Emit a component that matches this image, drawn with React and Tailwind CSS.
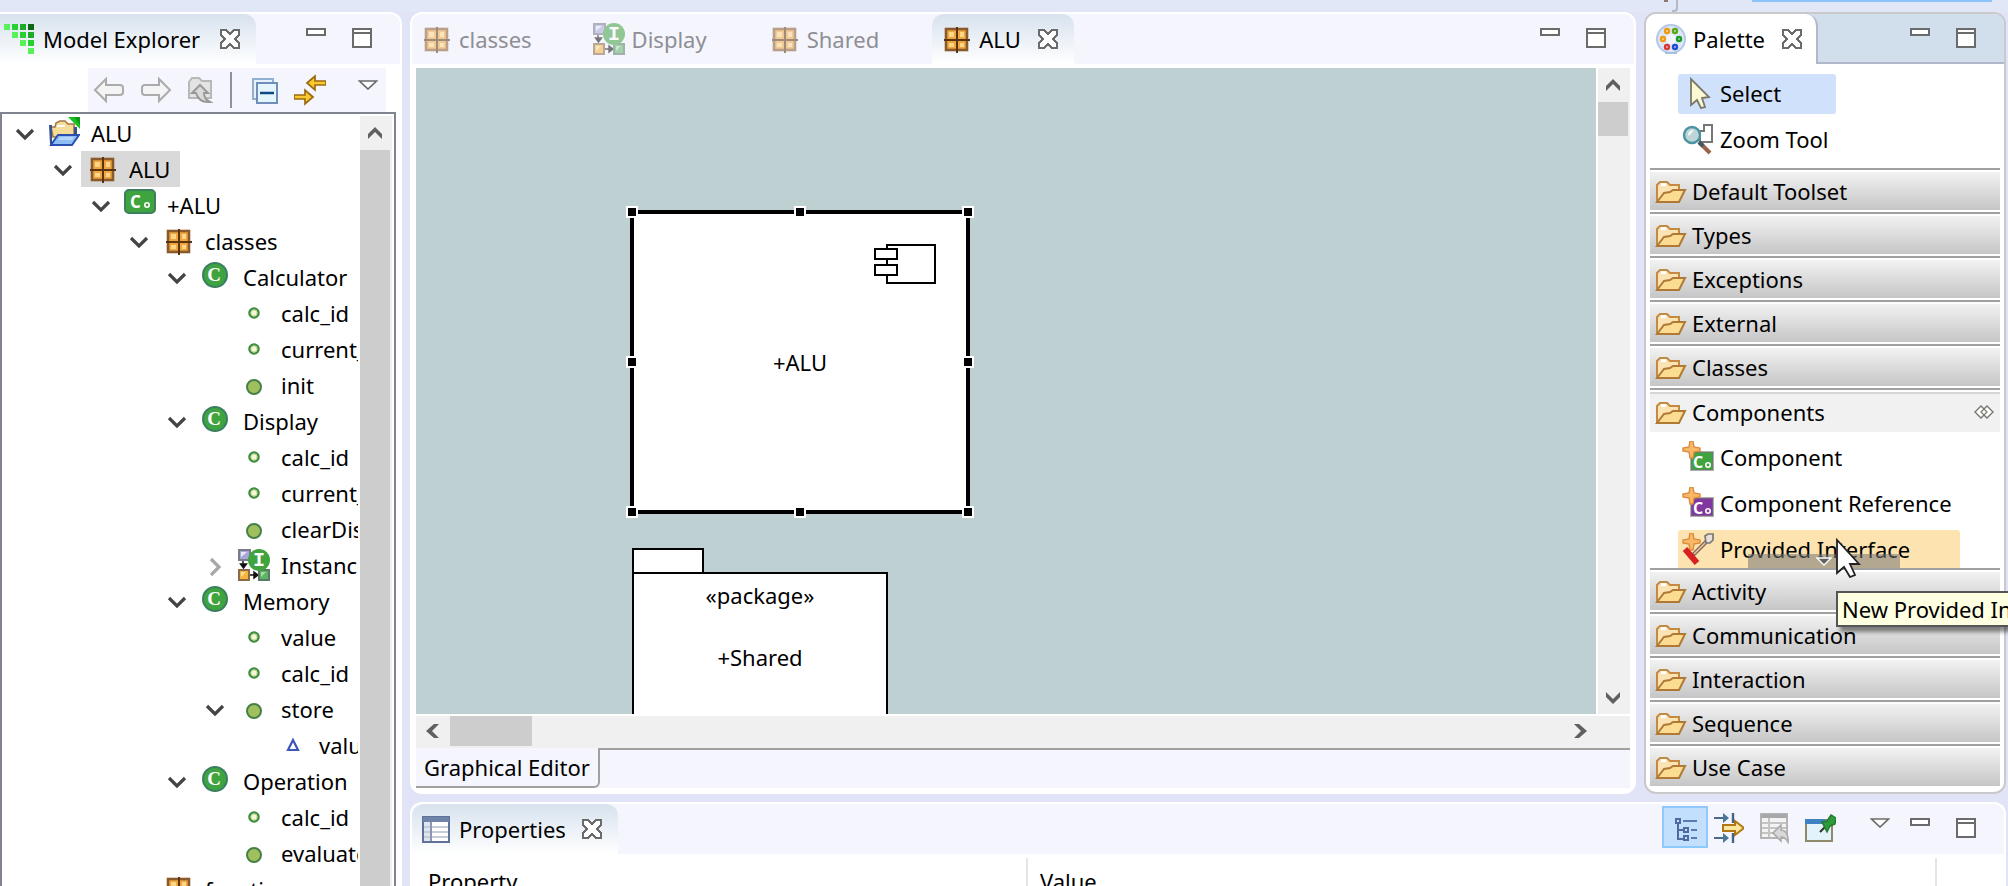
import React from 'react';

/* ---------- shared glyphs ---------- */

function CloseIcon({ className = '' }) {
  return (
    <svg viewBox="0 0 20 20" className={`h-5 w-5 shrink-0 ${className}`} aria-hidden="true">
      <path d="M1 1h5l4 4 4-4h5v5l-4 4 4 4v5h-5l-4-4-4 4H1v-5l4-4-4-4z" fill="#fff" stroke="#6b6b6b" strokeWidth="2" shapeRendering="crispEdges" />
    </svg>
  );
}

function MinMax() {
  return (
    <div className="flex items-start gap-[26px]">
      <button aria-label="Minimize">
        <svg viewBox="0 0 20 20" className="block h-5 w-5">
          <path d="M1 1h18v6H1z" fill="#fff" stroke="#6b6b6b" strokeWidth="2" />
        </svg>
      </button>
      <button aria-label="Maximize">
        <svg viewBox="0 0 20 20" className="block h-5 w-5">
          <path d="M1 1h18v18H1zM1 5h18" fill="#fff" stroke="#6b6b6b" strokeWidth="2" />
        </svg>
      </button>
    </div>
  );
}

function MenuTriangle() {
  return (
    <button aria-label="View Menu" className="block">
      <svg viewBox="0 0 20 10" className="block h-[10px] w-5">
        <path d="M1.5 1h17L10 9z" fill="#fff" stroke="#6b6b6b" strokeWidth="1.7" />
      </svg>
    </button>
  );
}

function Chevron({ dir = 'down', className = 'text-[#444]' }) {
  const d = {
    down: 'M8 13l8 8 8-8',
    right: 'M12 10l8 8-8 8',
  }[dir];
  return (
    <svg viewBox="0 0 32 32" className={`h-8 w-8 shrink-0 ${className}`} aria-hidden="true">
      <path d={d} fill="none" stroke="currentColor" strokeWidth="3.2" />
    </svg>
  );
}

function ScrollArrow({ dir, label, className = '' }) {
  const d = {
    up: 'M1 13V8l7-7 7 7v5L8 6z',
    down: 'M1 1v5l7 7 7-7V1L8 8z',
    left: 'M14 1H9L1 8l8 7h5L7 8z',
    right: 'M1 1h5l8 7-8 7H1l7-7z',
  }[dir];
  return (
    <button aria-label={label} className={`flex items-center justify-center ${className}`}>
      <svg viewBox="0 0 16 16" className="h-4 w-4">
        <path d={d} fill="#606060" />
      </svg>
    </button>
  );
}

/* ---------- model element icons ---------- */

function Svg({ children, className = '', box = '0 0 32 32' }) {
  return (
    <svg viewBox={box} className={`h-8 w-8 shrink-0 ${className}`} aria-hidden="true">
      {children}
    </svg>
  );
}

function PackageIcon({ className }) {
  return (
    <Svg className={className}>
      <rect x="6" y="6" width="21" height="21" fill="#f0a63e" stroke="#8a5a2c" strokeWidth="2.6" />
      <g fill="#fdd687">
        <rect x="9" y="9" width="5" height="5" />
        <rect x="20" y="9" width="4" height="5" />
        <rect x="9" y="20" width="5" height="4" />
        <rect x="20" y="20" width="4" height="4" />
      </g>
      <path d="M4 17h26M17 4v26" stroke="#5c3310" strokeWidth="2" />
    </Svg>
  );
}

function ProjectIcon() {
  return (
    <Svg>
      <path d="M3 10h4l1-4 4-2h5l3 3h6v13H5z" fill="#f5dc98" stroke="#a07a48" strokeWidth="1.6" />
      <path d="M1 8h3v20H2zM26 10h3v8h-3z" fill="#39528f" />
      <path d="M9 8h8v2H9z" fill="#fff" />
      <path d="M10 18h21l-7 10H3l2-3z" fill="#8fbdf5" stroke="#2b4fae" strokeWidth="2" />
      <path d="M12 20h14l-2 3H10z" fill="#b6d7fb" />
      <path d="M20 0h12v12z" fill="#18c022" />
      <path d="M26 0h6v8z" fill="#0d9a18" />
    </Svg>
  );
}

function ComponentIcon() {
  return (
    <Svg>
      <rect x="1" y="1" width="30" height="23" rx="4" fill="#3fa33f" stroke="#3a8060" strokeWidth="2" />
      <text x="6" y="19" fontFamily="Open Sans, sans-serif" fontSize="17" fontWeight="700" fill="#fff">C</text>
      <circle cx="23" cy="16" r="2.2" fill="none" stroke="#fff" strokeWidth="1.6" />
    </Svg>
  );
}

function ClassIcon() {
  return (
    <Svg>
      <circle cx="15" cy="14" r="12" fill="#3fa33f" stroke="#3a8060" strokeWidth="2" />
      <text x="14" y="20" textAnchor="middle" fontFamily="Liberation Serif, serif" fontSize="19" fontWeight="700" fill="#fff">C</text>
    </Svg>
  );
}

function AttributeIcon() {
  return (
    <Svg>
      <circle cx="16" cy="16" r="4.6" fill="#f4f7d8" stroke="#418a41" strokeWidth="2.4" />
      <circle cx="16" cy="16" r="3" fill="none" stroke="#c5dc8a" strokeWidth="1" />
    </Svg>
  );
}

function OperationIcon() {
  return (
    <Svg>
      <circle cx="16" cy="18" r="7" fill="#a0c060" stroke="#468046" strokeWidth="2" />
    </Svg>
  );
}

function ParameterIcon() {
  return (
    <Svg>
      <path d="M17 11l5 10H12z" fill="#fff" stroke="#3a58b8" strokeWidth="2.2" />
    </Svg>
  );
}

function InstancesIcon({ className }) {
  return (
    <Svg className={className}>
      <rect x="1" y="1" width="11" height="10" fill="#a8a8d8" stroke="#7a7a88" strokeWidth="2" />
      <path d="M3 3h6l-6 5z" fill="#e6e6fa" />
      <path d="M5 12v7M2.5 15h6L5.500 19zM11 26h8M16 23v6l4-3z" fill="#111" stroke="#111" strokeWidth="1.4" />
      <rect x="1" y="21" width="10" height="10" fill="#f5b53c" stroke="#8a6a4a" strokeWidth="2" />
      <path d="M3 23h5l-5 5z" fill="#fbdf96" />
      <rect x="21" y="21" width="10" height="10" fill="#5cb464" stroke="#5a7a68" strokeWidth="2" />
      <path d="M23 23h5l-5 5z" fill="#a6dca8" />
      <circle cx="21" cy="11" r="11" fill="#3fa33f" />
      <text x="21" y="17" textAnchor="middle" fontFamily="Liberation Mono, monospace" fontSize="20" fontWeight="700" fill="#fff">I</text>
    </Svg>
  );
}

const ICONS = {
  project: ProjectIcon,
  package: PackageIcon,
  component: ComponentIcon,
  class: ClassIcon,
  attribute: AttributeIcon,
  operation: OperationIcon,
  parameter: ParameterIcon,
  instances: InstancesIcon,
};

/* ---------- Model Explorer ---------- */

const attr = (name) => ({ name, icon: 'attribute' });
const op = (name, children) => ({ name, icon: 'operation', children });

const MODEL = [
  {
    name: 'ALU',
    icon: 'project',
    children: [
      {
        name: 'ALU',
        icon: 'package',
        selected: true,
        children: [
          {
            name: '+ALU',
            icon: 'component',
            children: [
              {
                name: 'classes',
                icon: 'package',
                children: [
                  { name: 'Calculator', icon: 'class', children: [attr('calc_id'), attr('current_value'), op('init')] },
                  {
                    name: 'Display',
                    icon: 'class',
                    children: [
                      attr('calc_id'),
                      attr('current_value'),
                      op('clearDisplay'),
                      { name: 'Instances', icon: 'instances', collapsed: true },
                    ],
                  },
                  {
                    name: 'Memory',
                    icon: 'class',
                    children: [attr('value'), attr('calc_id'), op('store', [{ name: 'value', icon: 'parameter' }])],
                  },
                  { name: 'Operation', icon: 'class', children: [attr('calc_id'), op('evaluate')] },
                ],
              },
              { name: 'functions', icon: 'package' },
            ],
          },
        ],
      },
    ],
  },
];

function TreeNode({ node }) {
  const Icon = ICONS[node.icon];
  return (
    <li role="treeitem" aria-selected={!!node.selected}>
      <div className="flex h-9 items-center whitespace-nowrap">
        <div className="mr-[2px] h-8 w-8 shrink-0">
          {(node.children || node.collapsed) && (
            <button aria-label={`Toggle ${node.name}`} className="block">
              <Chevron dir={node.collapsed ? 'right' : 'down'} className={node.collapsed ? 'text-[#a8a8a8]' : 'text-[#444]'} />
            </button>
          )}
        </div>
        <div className={`flex h-9 items-center gap-[11px] pr-[10px] pl-[5px] ${node.selected ? 'bg-[#d9d9d9]' : ''}`}>
          <Icon />
          <span>{node.name}</span>
        </div>
      </div>
      {node.children && (
        <ul role="group" className="pl-[38px]">
          {node.children.map((child, i) => (
            <TreeNode key={i} node={child} />
          ))}
        </ul>
      )}
    </li>
  );
}

function ExplorerToolbar() {
  return (
    <div className="mr-[14px] ml-auto flex h-11 w-[298px] items-center bg-[#f4f5fd] pl-[5px]">
      <button aria-label="Back">
        <Svg>
          <path d="M2 16L13 5v6h14q3 0 3 3v4q0 3-3 3H13v6z" fill="#f4f4f4" stroke="#ababab" strokeWidth="2" />
        </Svg>
      </button>
      <button aria-label="Forward" className="ml-[15px]">
        <Svg>
          <path d="M30 16L19 5v6H5q-3 0-3 3v4q0 3 3 3h14v6z" fill="#f4f4f4" stroke="#ababab" strokeWidth="2" />
        </Svg>
      </button>
      <button aria-label="Up" className="ml-[12px]">
        <Svg>
          <path d="M5 8l3-4h7l3 3h9v17H5z" fill="#e3e3e3" stroke="#b8b8b8" strokeWidth="2" />
          <path d="M16 11l8 8h-4q0 6 6 9-11 1-14-9H8z" fill="#dadada" stroke="#999" strokeWidth="2" />
        </Svg>
      </button>
      <span className="ml-[14px] h-9 w-[2px] bg-[#8f929c]" />
      <button aria-label="Collapse All" className="ml-[18px]">
        <Svg>
          <path d="M3 5h20v20H3z" fill="#e6f1fb" stroke="#8fb0d2" strokeWidth="2" />
          <path d="M7 9h20v20H7z" fill="#e4f5fd" stroke="#6f8fb8" strokeWidth="2" />
          <path d="M10 19h14" stroke="#0c4a80" strokeWidth="2.5" />
        </Svg>
      </button>
      <button aria-label="Link with Editor" className="ml-3">
        <Svg>
          <path d="M13 9l8-7v5h11v4H21v5zM19 23l-8-7v5H0v4h11v5z" fill="#f8ca30" stroke="#9a6a10" strokeWidth="1.700" />
        </Svg>
      </button>
      <span className="mb-[10px] ml-[32px]">
        <MenuTriangle />
      </span>
    </div>
  );
}

function ModelExplorer() {
  return (
    <aside className="flex w-[402px] shrink-0 flex-col overflow-hidden rounded-tr-xl border-t-2 border-r-2 border-white bg-white">
      <div className="flex h-[50px] shrink-0 bg-[#f4f5fd]">
        <div className="flex w-64 items-center rounded-tr-xl bg-linear-to-b from-[#d7e2ee] to-white">
          <svg viewBox="0 0 30 30" className="ml-1 h-[30px] w-[30px]" shapeRendering="crispEdges" aria-hidden="true">
            <path d="M0 0h6v6H0zM8 8h6v6H8zM16 16h6v6h-6zM24 24h6v6h-6z" fill="#5af05a" />
            <path d="M8 0h6v6H8zM16 8h6v6h-6zM24 16h6v6h-6z" fill="#28d032" />
            <path d="M16 0h6v6h-6zM24 8h6v6h-6z" fill="#1eac28" />
            <path d="M24 0h6v6h-6z" fill="#0c6a14" />
          </svg>
          <h2 className="ml-[9px] whitespace-nowrap">Model Explorer</h2>
          <button aria-label="Close Model Explorer" className="ml-5">
            <CloseIcon />
          </button>
        </div>
        <div className="mt-[14px] mr-7 ml-auto">
          <MinMax />
        </div>
      </div>
      <div className="shrink-0 pt-1">
        <ExplorerToolbar />
      </div>
      <div className="mr-1 flex min-h-0 flex-1 border-2 border-b-0 border-[#80848e] pr-[2px]">
        <ul role="tree" aria-label="Model" className="min-w-0 flex-1 overflow-hidden pt-px pl-[7px]">
          {MODEL.map((node, i) => (
            <TreeNode key={i} node={node} />
          ))}
        </ul>
        <div className="mt-[2px] ml-[2px] flex w-8 flex-col bg-[#f0f0f0]">
          <ScrollArrow dir="up" label="Scroll up" className="mr-[2px] h-[34px] pt-[2px]" />
          <div className="mr-[2px] flex-1 bg-[#cdcdcd]" />
        </div>
      </div>
    </aside>
  );
}

/* ---------- Editor ---------- */

const TABS = [
  { name: 'classes', Icon: PackageIcon },
  { name: 'Display', Icon: InstancesIcon },
  { name: 'Shared', Icon: PackageIcon },
  { name: 'ALU', Icon: PackageIcon, active: true },
];

const HANDLES = [
  '-top-2 -left-2',
  '-top-2 left-[160px]',
  '-top-2 -right-2',
  'top-[142px] -left-2',
  'top-[142px] -right-2',
  '-bottom-2 -left-2',
  '-bottom-2 left-[160px]',
  '-bottom-2 -right-2',
];

function Canvas() {
  return (
    <div className="relative min-w-0 flex-1 overflow-hidden bg-[#bfd0d3]">
      <div className="absolute top-[142px] left-[214px] flex h-[304px] w-[340px] items-center justify-center border-4 border-black bg-white">
        +ALU
        <svg viewBox="0 0 62 40" className="absolute top-[30px] right-[30px] h-10 w-[62px]" shapeRendering="crispEdges" aria-hidden="true">
          <path d="M13 1h48v38H13z" fill="#fff" stroke="#000" strokeWidth="2" />
          <path d="M1 5h22v10H1zM1 21h22v10H1z" fill="#fff" stroke="#000" strokeWidth="2" />
        </svg>
        {HANDLES.map((pos) => (
          <span key={pos} className={`absolute h-3 w-3 border-2 border-white bg-black ${pos}`} />
        ))}
      </div>
      <div className="absolute top-[480px] left-[216px] w-64">
        <div className="h-6 w-[72px] border-2 border-b-0 border-black bg-white" />
        <div className="flex h-64 flex-col items-center border-2 border-black bg-white pt-[6px]">
          <p>«package»</p>
          <p className="mt-8">+Shared</p>
        </div>
      </div>
    </div>
  );
}

function Editor() {
  return (
    <main className="flex min-h-0 min-w-0 flex-1 flex-col overflow-hidden rounded-xl border-2 border-white bg-white">
      <div className="flex h-[50px] shrink-0 bg-[#f4f5fd]" role="tablist">
        {TABS.map(({ name, Icon, active }) => (
          <div
            key={name}
            className={`flex items-center pr-4 pl-2 ${active ? 'rounded-t-xl bg-linear-to-b from-[#d7e2ee] to-white' : ''}`}
          >
            <button role="tab" aria-selected={!!active} className="flex items-center gap-[7px]">
              <Icon className={active ? '' : 'opacity-55'} />
              <span className={active ? '' : 'text-[#8e8e94]'}>{name}</span>
            </button>
            {active ? (
              <button aria-label={`Close ${name}`} className="ml-[17px]">
                <CloseIcon />
              </button>
            ) : (
              <span className="ml-[17px] w-5" />
            )}
          </div>
        ))}
        <div className="mt-[14px] mr-7 ml-auto">
          <MinMax />
        </div>
      </div>
      <div className="mx-1 mt-1 flex min-h-0 flex-1">
        <Canvas />
        <div className="ml-[2px] flex w-8 flex-col bg-[#f0f0f0]">
          <ScrollArrow dir="up" label="Scroll canvas up" className="mr-[2px] h-[34px] pt-[2px]" />
          <div className="mr-[2px] h-[34px] bg-[#cdcdcd]" />
          <ScrollArrow dir="down" label="Scroll canvas down" className="mt-auto mr-[2px] h-[30px]" />
        </div>
      </div>
      <div className="mx-1 flex h-[34px] shrink-0 border-t-2 border-white bg-[#f0f0f0] pr-[34px]">
        <ScrollArrow dir="left" label="Scroll canvas left" className="mb-[2px] w-[34px]" />
        <div className="mb-[2px] w-[82px] bg-[#cdcdcd]" />
        <ScrollArrow dir="right" label="Scroll canvas right" className="mb-[2px] ml-auto w-[30px]" />
      </div>
      <div className="mx-1 mb-1 flex h-10 shrink-0 bg-[#f4f5fd]">
        <button className="rounded-br-md border-r-2 border-b-2 border-[#a0a0a0] px-2 whitespace-nowrap">Graphical Editor</button>
        <div className="flex-1 border-t-2 border-[#a0a0a0]" />
      </div>
    </main>
  );
}

/* ---------- Palette ---------- */

function FolderIcon() {
  return (
    <Svg>
      <path d="M2 27V10l3-3h7l3 3h9v7" fill="#fbe3b4" stroke="#c48a44" strokeWidth="2" />
      <path d="M2 27l7-9 6-1 3-2h12l-6 12z" fill="#fbdc92" stroke="#b07a34" strokeWidth="2" />
      <path d="M6 8h5v3H6z" fill="#fff" />
    </Svg>
  );
}

function Spark() {
  return <path d="M8 0h3l1 6 6 1v3l-6 1-1 6H8l-1-6-6-1V7l6-1z" fill="#f8b868" stroke="#dc8a3c" strokeWidth="1.400" />;
}

function NewComponentIcon({ fill }) {
  return (
    <Svg>
      <rect x="9" y="11" width="22" height="18" fill={fill} stroke="#777" strokeOpacity="0.6" strokeWidth="2" />
      <Spark />
      <text x="11" y="27" fontFamily="Open Sans, sans-serif" fontSize="16" fontWeight="700" fill="#fff">C</text>
      <circle cx="26" cy="24" r="2.200" fill="none" stroke="#fff" strokeWidth="1.600" />
    </Svg>
  );
}

function ProvidedInterfaceIcon() {
  return (
    <Svg>
      <Spark />
      <path d="M11 22L25 8" stroke="#8a6a54" strokeWidth="4" />
      <path d="M12 21L25 8" stroke="#e8c8a8" strokeWidth="1.500" />
      <path d="M23 3l3-2h5v6l-3 3h-4z" fill="#e8e0d8" stroke="#777" strokeWidth="1.700" />
      <path d="M3 16l12 14" stroke="#d82020" strokeWidth="6" />
    </Svg>
  );
}

function SelectIcon() {
  return (
    <Svg>
      <path d="M9 2v26l6-5 4 8 4-1-3-9 7-1z" fill="#fbf8d4" stroke="#7a7868" strokeWidth="1.800" />
    </Svg>
  );
}

function ZoomIcon() {
  return (
    <Svg>
      <path d="M18 18V8h4V2h8v17H18z" fill="#fff" stroke="#777" strokeWidth="2" />
      <path d="M17 19l11 11" stroke="#9a6248" strokeWidth="4" />
      <path d="M17 19l4 4" stroke="#456" strokeWidth="4" />
      <circle cx="10" cy="12" r="8" fill="#bdd4d8" stroke="#4a94a4" strokeWidth="2.400" />
      <path d="M6 11q1-4 6-4l-5 6z" fill="#f4fafa" />
    </Svg>
  );
}

function PaletteIcon() {
  return (
    <Svg>
      <circle cx="16" cy="16" r="14" fill="#dde7f6" stroke="#b4c8e8" strokeWidth="2" />
      <circle cx="16" cy="16" r="5" fill="#f2f6fc" />
      <path d="M10 30h12" stroke="#a8bede" strokeWidth="2" />
      <g fill="#fff" strokeWidth="2.400">
        <circle cx="12" cy="8" r="2" stroke="#f09a10" />
        <circle cx="20" cy="8" r="2" stroke="#5aa818" />
        <circle cx="8" cy="16" r="2" stroke="#f09a10" />
        <circle cx="24" cy="16" r="2" stroke="#1c9a28" />
        <circle cx="12" cy="24" r="2" stroke="#d83838" />
        <circle cx="20" cy="24" r="2" stroke="#2050d0" />
      </g>
    </Svg>
  );
}

function PaletteItem({ icon, label, tone = '' }) {
  return (
    <button className={`flex h-10 w-full items-center gap-[6px] rounded-[3px] pr-2 pb-[2px] pl-1 whitespace-nowrap ${tone}`}>
      {icon}
      <span>{label}</span>
    </button>
  );
}

function Drawer({ name }) {
  return (
    <div className="shrink-0 border-t-2 border-[#a0a0a0] py-[2px]">
      <button className="flex h-[38px] w-full items-center gap-[5px] bg-linear-to-b from-[#f2f2f2] to-[#c6c6c6] pl-[5px]">
        <FolderIcon />
        <span>{name}</span>
      </button>
    </div>
  );
}

function Palette() {
  return (
    <aside className="flex w-[362px] shrink-0 flex-col rounded-xl border-2 border-[#c9c9cb] bg-white">
      <div className="flex h-[50px] shrink-0 rounded-t-[10px] bg-[#d1deec]">
        <div className="flex items-center rounded-tl-[10px] rounded-tr-xl border-r-2 border-[#b2b8cc] bg-white pr-[14px] pl-[9px]">
          <PaletteIcon />
          <h2 className="ml-[6px]">Palette</h2>
          <button aria-label="Close Palette" className="ml-[17px]">
            <CloseIcon />
          </button>
        </div>
        <div className="flex flex-1 justify-end border-b-2 border-[#b2b8cc] pt-[14px] pr-7">
          <MinMax />
        </div>
      </div>
      <div className="flex min-h-0 flex-1 flex-col px-1 pb-1">
        <div className="flex w-fit shrink-0 flex-col gap-[6px] pt-[10px] pb-2 pl-7">
          <PaletteItem icon={<SelectIcon />} label="Select" tone="bg-[#cfe1fb]" />
          <PaletteItem icon={<ZoomIcon />} label="Zoom Tool" />
        </div>
        {['Default Toolset', 'Types', 'Exceptions', 'External', 'Classes'].map((name) => (
          <Drawer key={name} name={name} />
        ))}
        <div className="relative flex min-h-0 flex-1 flex-col border-t-2 border-[#a0a0a0] pt-[2px]">
          <button className="flex h-10 w-full shrink-0 items-center gap-[5px] border-t-2 border-[#d6d6d6] bg-[#f1f1f1] pr-[6px] pb-[2px] pl-[5px]">
            <FolderIcon />
            <span>Components</span>
            <svg viewBox="0 0 20 14" className="ml-auto h-[14px] w-5" aria-hidden="true">
              <path d="M1 7l6-6 3 3 3-3 6 6-6 6-3-3-3 3z" fill="#fff" stroke="#77776a" strokeWidth="1.400" />
              <path d="M7 7l3-3 3 3-3 3z" fill="#fff" stroke="#77776a" strokeWidth="1.200" />
            </svg>
          </button>
          <div className="min-h-0 flex-1 overflow-hidden">
            <div className="flex w-fit flex-col gap-[6px] pt-[6px] pl-7">
              <PaletteItem icon={<NewComponentIcon fill="#3fa33f" />} label="Component" />
              <PaletteItem icon={<NewComponentIcon fill="#8038a0" />} label="Component Reference" />
              <PaletteItem icon={<ProvidedInterfaceIcon />} label="Provided Interface" tone="bg-[#fde3b0]" />
            </div>
          </div>
          <div className="absolute bottom-0 left-[98px] flex h-[14px] w-[152px] items-center justify-center bg-[#777]/55">
            <svg viewBox="0 0 16 9" className="h-[9px] w-4" aria-hidden="true">
              <path d="M1 1h14L8 8z" fill="#606060" stroke="#fff" strokeWidth="1.400" />
            </svg>
          </div>
          <svg viewBox="0 0 26 40" className="absolute -bottom-[10px] left-[186px] z-20 h-10 w-[26px]" aria-hidden="true">
            <path d="M1 2v33l7-6 6 10 5-2-5-11h9z" fill="#fff" stroke="#222" strokeWidth="1.800" />
          </svg>
          <div role="tooltip" className="absolute top-full left-[186px] z-10 mt-[23px] h-9 w-[172px] overflow-hidden border-2 border-r-0 border-[#555] bg-[#ffffe1] pl-1 leading-8 whitespace-nowrap shadow-[4px_5px_4px_rgba(0,0,0,0.45)]">
            New Provided Interface
          </div>
        </div>
        {['Activity', 'Communication', 'Interaction', 'Sequence', 'Use Case'].map((name) => (
          <Drawer key={name} name={name} />
        ))}
      </div>
    </aside>
  );
}

/* ---------- Properties ---------- */

function Properties() {
  return (
    <section className="flex h-[84px] shrink-0 flex-col overflow-hidden rounded-t-xl border-2 border-b-0 border-white bg-white">
      <div className="flex h-[50px] shrink-0 bg-[#f4f5fd]">
        <div className="flex items-center rounded-t-xl bg-linear-to-b from-[#d7e2ee] to-white pr-4 pl-2">
          <Svg>
            <rect x="3" y="4" width="26" height="25" fill="#fff" stroke="#5f7398" strokeWidth="2" />
            <path d="M3 4h26v5H3z" fill="#6f84a8" />
            <path d="M4 9h7v19H4z" fill="#dfe6f2" />
            <path d="M4 14h24M4 19h24M4 24h24" stroke="#c6ccd8" strokeWidth="2" />
            <path d="M11 9v19" stroke="#8c98b0" strokeWidth="2" />
          </Svg>
          <h2 className="ml-[7px]">Properties</h2>
          <button aria-label="Close Properties" className="ml-4">
            <CloseIcon />
          </button>
        </div>
        <div className="mr-7 ml-auto flex items-start pt-[2px]">
          <button aria-label="Show Categories" className="flex h-[42px] w-[46px] items-center justify-center border-2 border-[#8fc8fa] bg-[#c2e0fe]">
            <svg viewBox="0 0 26 26" className="mt-1 ml-[3px] h-[26px] w-[26px]">
              <path d="M4 7v16h6M4 14h6" fill="none" stroke="#4f6aa0" strokeWidth="2" />
              <path d="M2 3h4v4H2zM10 12h4v4h-4zM10 20h4v4h-4z" fill="#c2e0fe" stroke="#4f6aa0" strokeWidth="2" />
              <path d="M9 5h14M17 14h6M17 22h6" stroke="#5d7ab0" strokeWidth="2" />
            </svg>
          </button>
          <button aria-label="Show Advanced Properties" className="mt-[6px] ml-1">
            <Svg>
              <path d="M2 6h10M2 26h10" stroke="#4a6a88" strokeWidth="2.200" />
              <path d="M11 1l6 5-6 5zM11 21l6 5-6 5z" fill="#4a7898" />
              <path d="M21 1v10M21 21v10" stroke="#46608a" strokeWidth="2.400" />
              <path d="M11 13h12V9l9 7-9 7v-4H11z" fill="#fbe6a0" stroke="#b07814" strokeWidth="2" />
            </Svg>
          </button>
          <button aria-label="Restore Default Value" className="mt-[6px] ml-[14px]">
            <Svg>
              <path d="M3 2h26v24H3z" fill="#f3f3f3" stroke="#b4b4b4" strokeWidth="2" />
              <path d="M3 2h26v4H3z" fill="#a8a8a8" />
              <path d="M4 11h24M4 16h24M4 21h24M11 6v19" stroke="#c4c4c4" strokeWidth="2" />
              <path d="M15 21l8-8v5q8 1 7 12-3-5-7-5v4z" fill="#d8d8d8" stroke="#aaa" strokeWidth="1.600" />
            </Svg>
          </button>
          <button aria-label="Pin to Selection" className="mt-[6px] ml-[14px]">
            <Svg>
              <path d="M2 8h26v21H2z" fill="#e2f3fc" stroke="#8f8a68" strokeWidth="2" />
              <path d="M1 7h20v5H1z" fill="#3f82c4" />
              <path d="M16 20l6-6" stroke="#333" strokeWidth="2.200" />
              <path d="M18 10l5-1 4-6 5 3-1 6-5 2-3 6z" fill="#2f9a3c" stroke="#1f7a2c" strokeWidth="1.400" />
            </Svg>
          </button>
          <div className="mt-3 ml-[34px]">
            <MenuTriangle />
          </div>
          <div className="mt-3 ml-5">
            <MinMax />
          </div>
        </div>
      </div>
      <div className="mx-1 mt-1">
        <table className="w-full table-fixed border-collapse">
          <thead>
            <tr className="h-[46px] text-left">
              <th className="w-[611px] border-r-2 border-[#e5e5e5] p-0 pl-3 font-normal">Property</th>
              <th className="border-r-2 border-[#e5e5e5] p-0 pl-3 font-normal">Value</th>
              <th className="w-16 p-0" aria-label="Spare column" />
            </tr>
          </thead>
        </table>
      </div>
    </section>
  );
}

export default function App() {
  return (
    <div className="flex h-screen flex-col overflow-hidden bg-[#e1e4f6] font-['Noto_Sans','Open_Sans',sans-serif] text-[22px] leading-[30px] text-black">
      <div className="flex h-3 shrink-0 items-start justify-end bg-[#e1e7f6]">
        <span className="h-[2px] w-1 bg-[#8a7a70]" />
        <span className="ml-1 h-3 w-[6px] rounded-br-sm border-r-2 border-b-2 border-[#b4b8cc]" />
        <span className="mr-4 ml-[74px] h-[2px] w-60 bg-[#8cc4fa]" />
      </div>
      <div className="flex min-h-0 flex-1 gap-2">
        <ModelExplorer />
        <div className="flex min-w-0 flex-1 flex-col gap-2 pr-[2px]">
          <div className="flex min-h-0 flex-1 gap-2">
            <Editor />
            <Palette />
          </div>
          <Properties />
        </div>
      </div>
    </div>
  );
}
